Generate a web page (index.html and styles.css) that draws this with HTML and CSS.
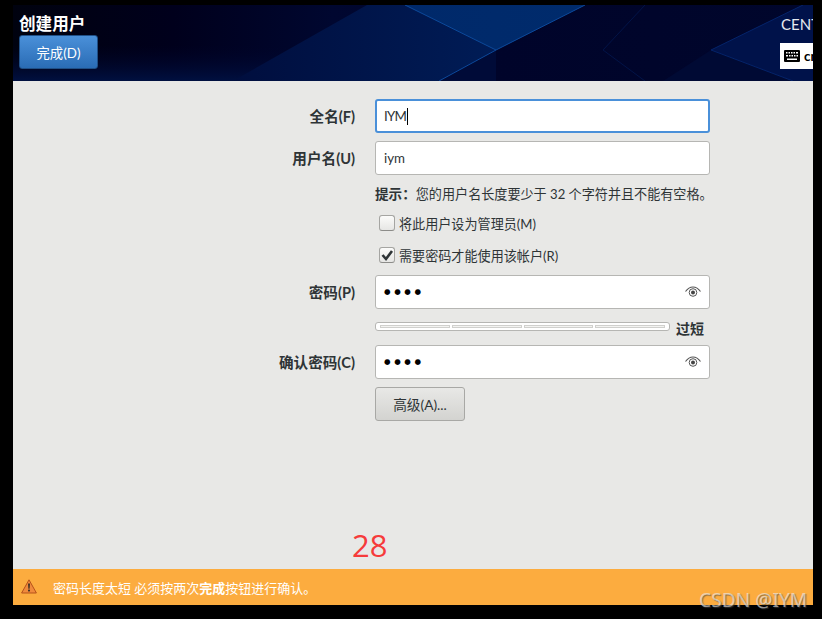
FILE: index.html
```html
<!DOCTYPE html>
<html lang="zh-CN">
<head>
<meta charset="utf-8">
<title>创建用户</title>
<link rel="stylesheet" href="styles.css">
</head>
<body>
<div class="window">
  <header class="topbar">
    <svg class="topbar-art" viewBox="0 0 800 76" preserveAspectRatio="none" aria-hidden="true">
      <defs>
        <linearGradient id="sky" x1="0" x2="1" y1="0" y2="0">
          <stop offset="0" stop-color="#00020f"/>
          <stop offset="0.2" stop-color="#00001c"/>
          <stop offset="0.4" stop-color="#000730"/>
          <stop offset="0.6" stop-color="#00042a"/>
          <stop offset="1" stop-color="#00062c"/>
        </linearGradient>
        <linearGradient id="band" x1="0" x2="1" y1="0" y2="0">
          <stop offset="0" stop-color="#000e3e"/>
          <stop offset="1" stop-color="#001c56"/>
        </linearGradient>
        <linearGradient id="facet" x1="0" x2="1" y1="0" y2="0">
          <stop offset="0" stop-color="#00296a"/>
          <stop offset="1" stop-color="#002b6c"/>
        </linearGradient>
        <linearGradient id="lower" x1="0" x2="0" y1="0" y2="1">
          <stop offset="0" stop-color="#00042a" stop-opacity="0"/>
          <stop offset="1" stop-color="#001040"/>
        </linearGradient>
      </defs>
      <rect width="800" height="76" fill="url(#sky)"/>
      <rect y="40" width="360" height="36" fill="url(#lower)"/>
      <polygon points="354,0 392,0 483,45 426,76 220,76" fill="url(#band)"/>
      <polygon points="392,0 572,0 483,45" fill="url(#facet)"/>
      <polygon points="426,76 483,45 483,76" fill="#000b38"/>
      <polygon points="698,45 790,0 800,0 800,76 780,76" fill="#00124a"/>
      <polygon points="698,45 780,76 650,76" fill="#000a34"/>
      <path d="M392 0 483 45 426 76M483 45 572 0" fill="none" stroke="#0c4a9c" stroke-width="1"/>
      <path d="M698 45 780 76M698 45 790 0" fill="none" stroke="#04246a" stroke-width="1"/>
      <path d="M590 45 632 0M590 45 632 76" fill="none" stroke="#021448" stroke-width="1"/>
    </svg>
    <div class="topbar-left">
      <h1 class="title">创建用户</h1>
      <button class="done-btn" type="button">完成(D)</button>
    </div>
    <div class="topbar-right">
      <div class="product">CENTOS 7 安装</div>
      <div class="kbd">
        <svg class="kbd-icon" viewBox="0 0 16 12" aria-hidden="true">
          <path fill="#000" fill-rule="evenodd" d="M1 0h14a1 1 0 0 1 1 1v10a1 1 0 0 1-1 1H1a1 1 0 0 1-1-1V1a1 1 0 0 1 1-1zM2 2v1.500h1.500V2zM4.500 2v1.500H6V2zM7 2v1.500h1.500V2zM9.500 2v1.500H11V2zM12 2v1.500h2V2zM2 5v1.500h2V5zM5 5v1.500h1.500V5zM7.500 5v1.500H9V5zM10 5v1.500h1.500V5zM12.500 5v1.500H14V5zM3 8.500V10h10V8.500z"/>
        </svg>
        <span class="kbd-text">cn</span>
      </div>
    </div>
  </header>

  <main class="content">
    <form class="form">
      <label class="lbl">全名(F)</label>
      <div class="entry focused"><span class="typed">IYM</span><i class="caret"></i></div>

      <label class="lbl">用户名(U)</label>
      <div class="entry"><span>iym</span></div>

      <p class="hint"><b>提示：</b>您的用户名长度要少于 32 个字符并且不能有空格。</p>

      <div class="check-row first">
        <span class="box"></span><span>将此用户设为管理员(M)</span>
      </div>
      <div class="check-row second">
        <span class="box">
          <svg viewBox="0 0 14 14" aria-hidden="true"><path d="M2.500 7 6 11 12 3" fill="none" stroke="#2e3436" stroke-width="2.600"/></svg>
        </span><span>需要密码才能使用该帐户(R)</span>
      </div>

      <label class="lbl pw-gap">密码(P)</label>
      <div class="entry pw-gap">
        <span class="dots">●●●●</span>
        <svg class="eye" viewBox="0 0 16 12" aria-hidden="true">
          <path d="M.5 5.500C3 2 5.500 1 8 1s5 1 7.500 4.500" fill="none" stroke="#555" stroke-width="1.200"/>
          <circle cx="8" cy="6.500" r="3.800" fill="none" stroke="#555" stroke-width="1"/>
          <circle cx="8" cy="6.500" r="2" fill="#444"/>
        </svg>
      </div>

      <div class="strength-row">
        <div class="meter"><i></i><i></i><i></i><i></i></div>
        <b class="strength-text">过短</b>
      </div>

      <label class="lbl">确认密码(C)</label>
      <div class="entry">
        <span class="dots">●●●●</span>
        <svg class="eye" viewBox="0 0 16 12" aria-hidden="true">
          <path d="M.5 5.500C3 2 5.500 1 8 1s5 1 7.500 4.500" fill="none" stroke="#555" stroke-width="1.200"/>
          <circle cx="8" cy="6.500" r="3.800" fill="none" stroke="#555" stroke-width="1"/>
          <circle cx="8" cy="6.500" r="2" fill="#444"/>
        </svg>
      </div>

      <div class="adv-row"><button class="adv-btn" type="button">高级(A)...</button></div>
    </form>
    <div class="counter">28</div>
  </main>

  <footer class="warning">
    <svg class="warn-icon" viewBox="0 0 16 15" aria-hidden="true">
      <path d="M8 .8 15.400 14H.6z" fill="#f08a3c" stroke="#b5521a" stroke-width="1" stroke-linejoin="round"/>
      <path d="M7.100 4.500h1.800l-.3 5.200H7.400z" fill="#2e2a26"/>
      <rect x="7.100" y="10.600" width="1.800" height="1.800" fill="#2e2a26"/>
    </svg>
    <span>密码长度太短 必须按两次<b>完成</b>按钮进行确认。</span>
  </footer>
</div>
<div class="watermark">CSDN @IYM</div>
</body>
</html>
```

FILE: styles.css
```css
* { box-sizing: border-box; }
html, body { margin: 0; height: 100%; overflow: hidden; }
body {
  background: #000;
  padding: 5px 9px 14px 13px;
  position: relative;
  font-family: Lato, "Noto Sans CJK SC", sans-serif;
  font-size: 13.33px;
  color: #2e3436;
}
.window {
  width: 800px;
  height: 600px;
  display: flex;
  flex-direction: column;
  background: #e8e8e6;
  overflow: hidden;
}
.topbar {
  position: relative;
  height: 76px;
  flex: none;
  display: flex;
  justify-content: space-between;
  overflow: hidden;
}
.topbar-art { position: absolute; inset: 0; width: 100%; height: 100%; }
.topbar-left {
  position: relative;
  padding: 9px 0 0 6px;
  display: flex;
  flex-direction: column;
  align-items: flex-start;
}
.title {
  margin: 0;
  height: 21px;
  font-size: 16.600px;
  line-height: 21px;
  font-weight: 700;
  color: #fff;
}
.done-btn {
  width: 79px;
  height: 34px;
  padding: 0;
  font: inherit;
  color: #fff;
  background: linear-gradient(#4a90d9, #2a6cb5);
  border: 1px solid #1f4f86;
  border-radius: 3px;
}
.topbar-right {
  position: relative;
  width: 33px;
  flex: none;
  white-space: nowrap;
}
.product {
  margin: 9px 0 0 1px;
  height: 21px;
  line-height: 21px;
  font-size: 15px;
  color: #e6eaf0;
}
.kbd {
  margin-top: 8px;
  width: 100px;
  height: 26px;
  background: #fff;
  display: flex;
  align-items: center;
  padding-left: 4px;
  gap: 4px;
  color: #000;
  font-weight: 700;
}
.kbd-icon { width: 16px; height: 12px; flex: none; }
.kbd-text { font-size: 13.33px; }

.content { position: relative; flex: 1; min-height: 0; }
.form {
  display: grid;
  grid-template-columns: 342px 335px;
  column-gap: 20px;
  align-items: start;
  padding-top: 18px;
}
.lbl {
  height: 34px;
  line-height: 36px;
  font-size: 14.600px;
  text-align: right;
  font-weight: 700;
  color: #2e3436;
  white-space: nowrap;
}
.entry {
  grid-column: 2;
  height: 34px;
  display: flex;
  align-items: center;
  padding: 0 8px;
  background: #fff;
  border: 1px solid #b6b6b3;
  border-radius: 3px;
  margin-bottom: 8px;
}
.entry.focused { border: 2px solid #4a90d9; padding: 0 7px; }
.typed { letter-spacing: -.8px; margin-right: 1px; }
.caret { width: 1px; height: 17px; background: #000; }
.dots {
  font-size: 7.500px;
  letter-spacing: 3.600px;
  color: #000;
  font-family: "DejaVu Sans", sans-serif;
  position: relative;
  top: -1px;
}
.eye { width: 16px; height: 12px; margin-left: auto; }
.hint {
  grid-column: 2;
  margin: 0;
  height: 22px;
  line-height: 22px;
  font-size: 13.100px;
  white-space: nowrap;
}
.hint b { font-weight: 700; font-size: 13.600px; }
.check-row {
  grid-column: 2;
  display: flex;
  align-items: center;
  gap: 4px;
  padding-left: 4px;
  height: 20px;
  font-size: 13.100px;
  white-space: nowrap;
}
.check-row.first { margin-top: 8px; }
.check-row.second { margin-top: 12px; }
.box {
  width: 16px;
  height: 16px;
  flex: none;
  border: 1px solid #a5a5a2;
  border-bottom-color: #8c8c89;
  border-radius: 3px;
  background: linear-gradient(#fbfbfa, #e6e6e4);
  display: block;
}
.box svg { display: block; width: 14px; height: 14px; }
.entry.pw-gap { margin-top: 10px; }
.lbl.pw-gap { margin-top: 10px; }
.strength-row {
  grid-column: 2;
  display: flex;
  align-items: center;
  gap: 6px;
  height: 19px;
  margin-bottom: 9px;
  white-space: nowrap;
}
.meter {
  width: 295px;
  height: 9px;
  display: flex;
  gap: 2px;
  padding: 2px 4px;
  background: #fff;
  border: 1px solid #b6b6b3;
  border-radius: 3px;
}
.meter i { flex: 1; background: #f3f3f1; border: 1px solid #d0d0cd; }
.strength-text { font-weight: 700; font-size: 14px; position: relative; top: 1px; }
.adv-row { grid-column: 2; }
.adv-btn {
  display: block;
  width: 90px;
  height: 34px;
  padding: 0;
  font: inherit;
  font-size: 13.700px;
  color: #2e3436;
  background: linear-gradient(#e8e8e6, #d3d3d0);
  border: 1px solid #a8a8a5;
  border-radius: 3px;
}
.counter {
  position: absolute;
  left: 339px;
  top: 442px;
  font-size: 31px;
  line-height: 44px;
  color: #f63b3b;
  font-family: "Open Sans", sans-serif;
}
.warning {
  height: 36px;
  flex: none;
  display: flex;
  align-items: center;
  font-size: 13px;
  background: #fcac3f;
  color: #fff;
  padding-left: 8px;
  gap: 16px;
}
.warn-icon { width: 16px; height: 15px; flex: none; margin-bottom: 2px; }
.warning b { font-weight: 700; }
.watermark {
  position: absolute;
  left: 699px;
  top: 589px;
  font-family: "Noto Sans", sans-serif;
  font-size: 19.200px;
  line-height: 22px;
  color: rgba(240, 240, 240, .62);
  text-shadow: 1px 1px 1px rgba(70, 70, 70, .6);
  white-space: nowrap;
}
```
